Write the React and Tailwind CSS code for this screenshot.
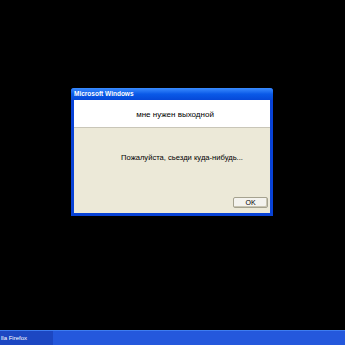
import React from 'react';

// XP-style message box on a black desktop
function App() {
  return (
    <div
      className="w-[345px] h-[345px] bg-black flex flex-col overflow-hidden"
      style={{ fontFamily: '"Liberation Sans", Arial, sans-serif' }}
    >
      <div className="flex-1 pt-[88px] pl-[71px]">
        <div className="w-[202px] h-[128px] flex flex-col bg-[#0842d6] rounded-t-[3px] overflow-hidden">
          {/* title bar */}
          <div className="h-[12px] flex items-center pl-[3px] bg-gradient-to-b from-[#3a8cff] via-[#0a5ae8] to-[#0648d8]">
            <span className="text-white font-bold text-[6.5px] leading-none">
              Microsoft Windows
            </span>
          </div>
          {/* body */}
          <div className="flex-1 flex flex-col mx-[3px] mb-[3px]">
            <div className="h-[28px] bg-white flex items-center justify-center border-b border-[#c9c6b8]">
              <span className="text-[8px] text-black pl-[6px] pt-[2px]">мне нужен выходной</span>
            </div>
            <div className="flex-1 bg-[#ece9d8] flex flex-col">
              <div className="h-[69px] flex items-center justify-center">
                <span className="text-[7.6px] text-black pl-[20px] pb-[9px]">
                  Пожалуйста, сьезди куда-нибудь...
                </span>
              </div>
              <div className="flex justify-end pr-[2px]">
                <div className="w-[35px] h-[11px] flex items-center justify-center bg-[#f4f3ee] border border-[#a5a28f] rounded-[2px] shadow-[inset_-1px_-1px_0_#c9c5b2]">
                  <span className="text-[7px] text-black leading-none">OK</span>
                </div>
              </div>
            </div>
          </div>
        </div>
      </div>
      {/* taskbar */}
      <div className="h-[15px] flex bg-[#2458dc] border-t border-[#3d7cf0]">
        <div className="w-[53px] h-full bg-[#1c47c2] flex items-center">
          <span className="text-white text-[6px] leading-none pl-[1px]">lla Firefox</span>
        </div>
      </div>
    </div>
  );
}

export default App;
